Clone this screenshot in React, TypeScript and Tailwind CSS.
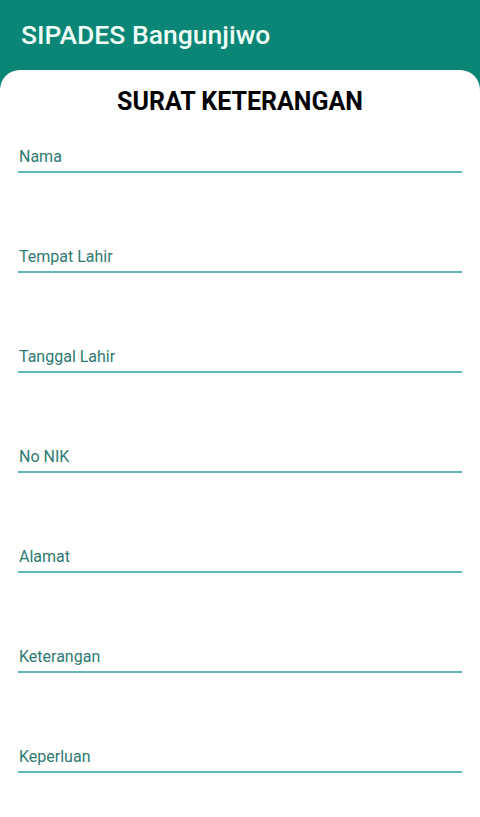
import React from 'react';

const fields = ['Nama', 'Tempat Lahir', 'Tanggal Lahir', 'No NIK', 'Alamat', 'Keterangan', 'Keperluan'];

const App: React.FC = () => {
  return (
    <div className="min-h-[817px] bg-[#0b8676] font-['Roboto',sans-serif]">
      {/* App bar */}
      <header className="h-[70px] flex items-center px-[21px]">
        <h1 className="text-[26.5px] font-medium text-[#eefdf8]">SIPADES Bangunjiwo</h1>
      </header>

      {/* Form card */}
      <main className="bg-white rounded-t-[20px] min-h-[747px] px-[18px] pt-[18px] pb-10">
        <h2 className="text-center text-[25px] leading-7 font-bold text-black">SURAT KETERANGAN</h2>

        <div className="mt-[31px] flex flex-col gap-[74px]">
          {fields.map((label) => (
            <div key={label} className="border-b-2 border-[#5fb7bd] pb-[4px]">
              <span className="block text-[16px] leading-5 text-[#2f7a72] pl-[1px]">{label}</span>
            </div>
          ))}
        </div>
      </main>
    </div>
  );
};

export default App;
